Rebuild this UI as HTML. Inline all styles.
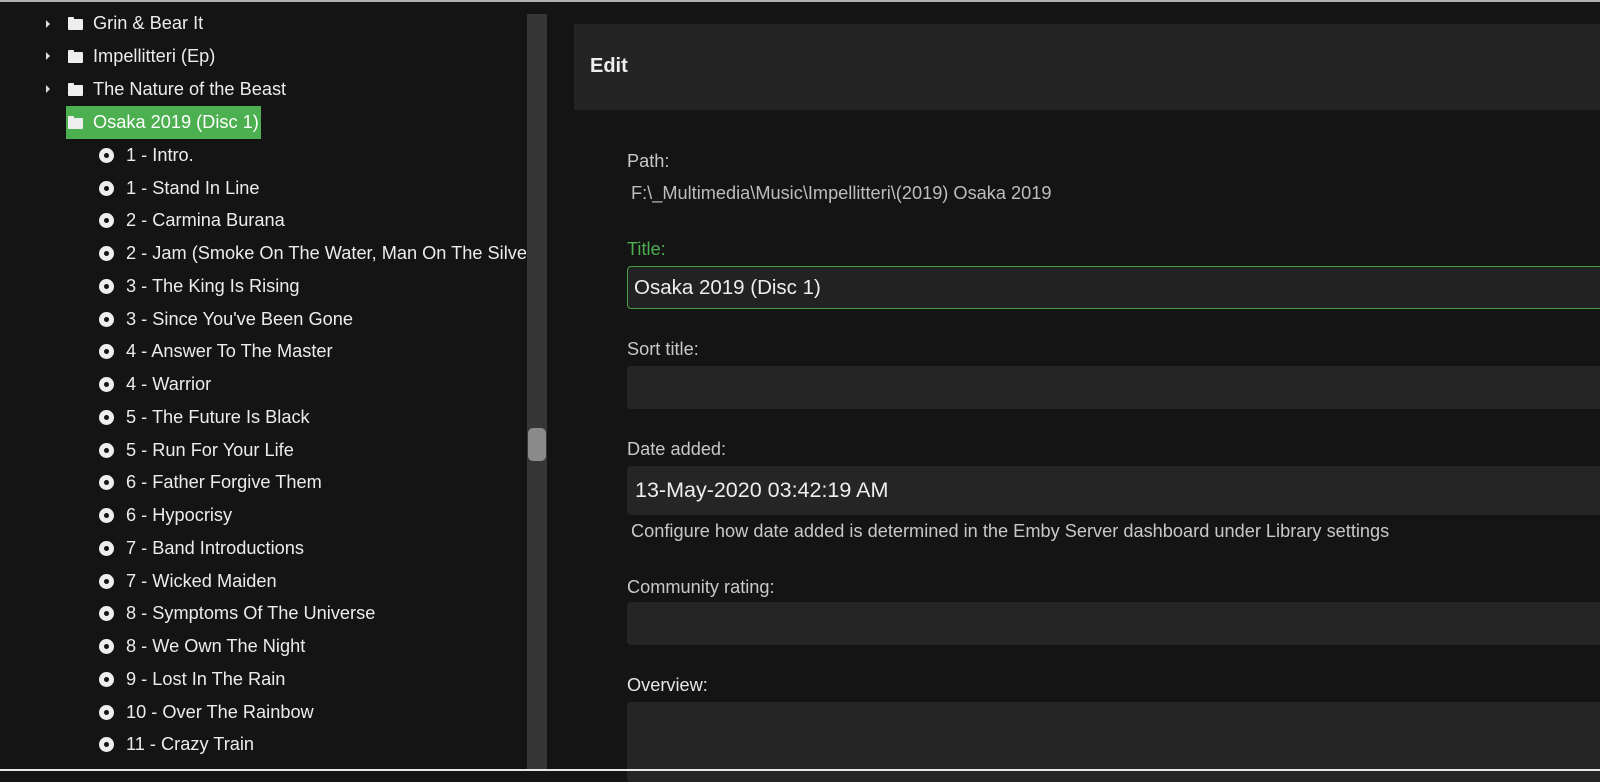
<!DOCTYPE html>
<html><head><meta charset="utf-8"><style>
*{margin:0;padding:0;box-sizing:border-box}
body{width:1600px;height:771px;background:#141414;overflow:hidden;position:relative;font-family:"Liberation Sans",sans-serif;color:#e6e6e6}
.topline{position:absolute;left:0;top:0;width:1600px;height:2px;background:#b0b0b0}
.botline{position:absolute;left:0;top:769px;width:1600px;height:2px;background:#e8e8e8}
.row{position:absolute;height:32px;line-height:32px;font-size:18.2px;white-space:nowrap;color:#ececec}
.arr{position:absolute;left:46px;width:0;height:0;border-top:4px solid transparent;border-bottom:4px solid transparent;border-left:4px solid #ddd}
.fold{position:absolute;left:68px;width:15px;height:11px;background:#eee;border-radius:1px}
.fold:before{content:"";position:absolute;left:0;top:-2px;width:6px;height:3px;background:#eee;border-radius:1px 1px 0 0}
.ico{position:absolute;left:99px;width:15px;height:15px;border-radius:50%;background:#eee}
.ico:after{content:"";position:absolute;left:5px;top:5px;width:5px;height:5px;border-radius:50%;background:#141414}
.sel{position:absolute;left:66px;top:106px;width:195px;height:33px;background:#4caf50}
.track{position:absolute;left:527px;top:14px;width:20px;height:756px;background:#363636}
.thumb{position:absolute;left:528px;top:428px;width:18px;height:33px;background:#8a8a8a;border-radius:5px}
.hdr{position:absolute;left:574px;top:24px;width:1026px;height:86px;background:#242424}
.hdr span{position:absolute;left:16px;top:31px;font-size:20px;font-weight:bold;color:#eee}
.lbl{position:absolute;left:627px;font-size:18.2px;color:#c8c8c8}
.inp{position:absolute;left:627px;width:980px;background:#252525;border-radius:4px}
.txt{position:absolute;font-size:20.5px;color:#eee}
</style></head><body>
<div class="topline"></div>
<div class="sel"></div>
<div class="track"></div><div class="thumb"></div>

<div class="arr" style="top:20px"></div><div class="fold" style="top:19px"></div><div class="row" style="left:93px;top:7px">Grin &amp; Bear It</div>
<div class="arr" style="top:52px"></div><div class="fold" style="top:52px"></div><div class="row" style="left:93px;top:40px">Impellitteri (Ep)</div>
<div class="arr" style="top:85px"></div><div class="fold" style="top:85px"></div><div class="row" style="left:93px;top:73px">The Nature of the Beast</div>
<div class="fold" style="top:118px"></div><div class="row" style="left:93px;top:106px;color:#fff">Osaka 2019 (Disc 1)</div>

<div class="ico" style="top:148px"></div><div class="row" style="left:126px;top:139px">1 - Intro.</div>
<div class="ico" style="top:181px"></div><div class="row" style="left:126px;top:172px">1 - Stand In Line</div>
<div class="ico" style="top:213px"></div><div class="row" style="left:126px;top:204px">2 - Carmina Burana</div>
<div class="ico" style="top:246px"></div><div class="row" style="left:126px;top:237px;width:401px;overflow:hidden">2 - Jam (Smoke On The Water, Man On The Silver Mountain)</div>
<div class="ico" style="top:279px"></div><div class="row" style="left:126px;top:270px">3 - The King Is Rising</div>
<div class="ico" style="top:312px"></div><div class="row" style="left:126px;top:303px">3 - Since You've Been Gone</div>
<div class="ico" style="top:344px"></div><div class="row" style="left:126px;top:335px">4 - Answer To The Master</div>
<div class="ico" style="top:377px"></div><div class="row" style="left:126px;top:368px">4 - Warrior</div>
<div class="ico" style="top:410px"></div><div class="row" style="left:126px;top:401px">5 - The Future Is Black</div>
<div class="ico" style="top:443px"></div><div class="row" style="left:126px;top:434px">5 - Run For Your Life</div>
<div class="ico" style="top:475px"></div><div class="row" style="left:126px;top:466px">6 - Father Forgive Them</div>
<div class="ico" style="top:508px"></div><div class="row" style="left:126px;top:499px">6 - Hypocrisy</div>
<div class="ico" style="top:541px"></div><div class="row" style="left:126px;top:532px">7 - Band Introductions</div>
<div class="ico" style="top:574px"></div><div class="row" style="left:126px;top:565px">7 - Wicked Maiden</div>
<div class="ico" style="top:606px"></div><div class="row" style="left:126px;top:597px">8 - Symptoms Of The Universe</div>
<div class="ico" style="top:639px"></div><div class="row" style="left:126px;top:630px">8 - We Own The Night</div>
<div class="ico" style="top:672px"></div><div class="row" style="left:126px;top:663px">9 - Lost In The Rain</div>
<div class="ico" style="top:705px"></div><div class="row" style="left:126px;top:696px">10 - Over The Rainbow</div>
<div class="ico" style="top:737px"></div><div class="row" style="left:126px;top:728px">11 - Crazy Train</div>

<div class="hdr"><span>Edit</span></div>
<div class="lbl" style="top:151px">Path:</div>
<div class="lbl" style="top:183px;left:631px;color:#bdbdbd">F:\_Multimedia\Music\Impellitteri\(2019) Osaka 2019</div>
<div class="lbl" style="top:239px;color:#4caf50">Title:</div>
<div class="inp" style="top:266px;height:43px;border:1.5px solid #4a9e45;background:#222"></div>
<div class="txt" style="left:634px;top:276px">Osaka 2019 (Disc 1)</div>
<div class="lbl" style="top:339px">Sort title:</div>
<div class="inp" style="top:366px;height:43px"></div>
<div class="lbl" style="top:439px">Date added:</div>
<div class="inp" style="top:466px;height:49px"></div>
<div class="txt" style="left:635px;top:478px;font-size:21.5px">13-May-2020 03:42:19 AM</div>
<div class="lbl" style="top:521px;left:631px">Configure how date added is determined in the Emby Server dashboard under Library settings</div>
<div class="lbl" style="top:577px">Community rating:</div>
<div class="inp" style="top:602px;height:43px"></div>
<div class="lbl" style="top:675px;color:#e6e6e6">Overview:</div>
<div class="inp" style="top:702px;height:80px"></div>
<div class="botline"></div>
</body></html>
